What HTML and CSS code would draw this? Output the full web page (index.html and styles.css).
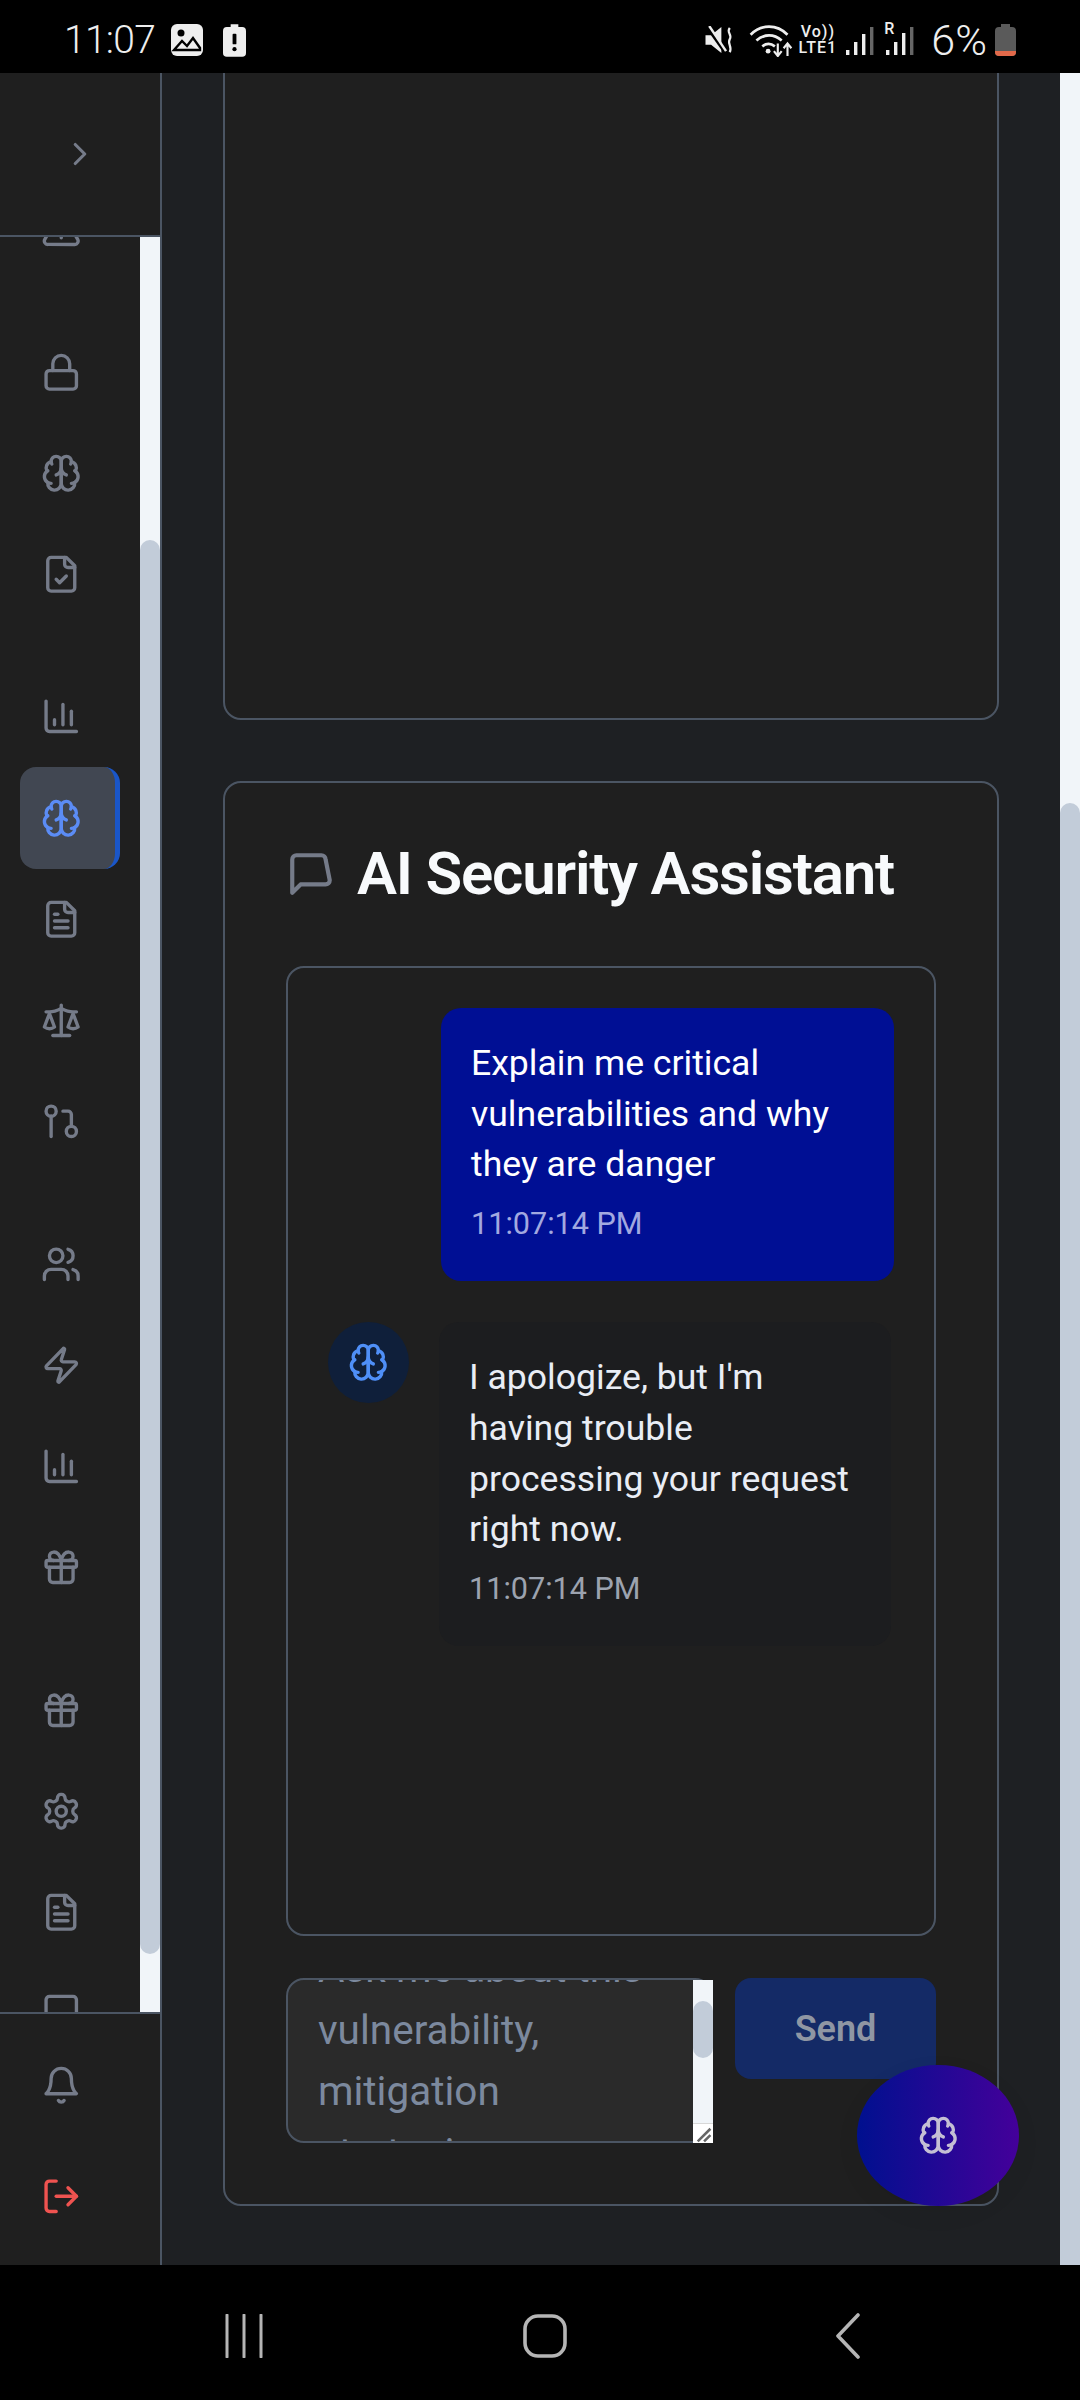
FILE: index.html
```html
<!DOCTYPE html>
<html lang="en">
<head>
  <meta charset="UTF-8">
  <meta name="viewport" content="width=device-width, initial-scale=1.0">
  <title>AI Security Assistant</title>
  <link rel="stylesheet" href="styles.css">
</head>
<body>
  <svg class="sprites" xmlns="http://www.w3.org/2000/svg">
    <symbol id="i-alert" viewBox="0 0 24 24"><path d="m21.73 18-8-14a2 2 0 0 0-3.48 0l-8 14A2 2 0 0 0 4 21h16a2 2 0 0 0 1.73-3"/><path d="M12 9v4"/><path d="M12 17h.01"/></symbol>
    <symbol id="i-lock" viewBox="0 0 24 24"><rect x="3" y="11" width="18" height="11" rx="2"/><path d="M7 11V7a5 5 0 0 1 10 0v4"/></symbol>
    <symbol id="i-brain" viewBox="0 0 24 24"><path d="M12 5a3 3 0 1 0-5.997.125 4 4 0 0 0-2.526 5.77 4 4 0 0 0 .556 6.588A4 4 0 1 0 12 18Z"/><path d="M12 5a3 3 0 1 1 5.997.125 4 4 0 0 1 2.526 5.77 4 4 0 0 1-.556 6.588A4 4 0 1 1 12 18Z"/><path d="M15 13a4.5 4.5 0 0 1-3-4 4.5 4.5 0 0 1-3 4"/><path d="M17.599 6.5a3 3 0 0 0 .399-1.375"/><path d="M6.003 5.125A3 3 0 0 0 6.401 6.5"/><path d="M3.477 10.896a4 4 0 0 1 .585-.396"/><path d="M19.938 10.5a4 4 0 0 1 .585.396"/><path d="M6 18a4 4 0 0 1-1.967-.516"/><path d="M19.967 17.484A4 4 0 0 1 18 18"/></symbol>
    <symbol id="i-file-check" viewBox="0 0 24 24"><path d="M15 2H6a2 2 0 0 0-2 2v16a2 2 0 0 0 2 2h12a2 2 0 0 0 2-2V7Z"/><path d="M14 2v4a2 2 0 0 0 2 2h4"/><path d="m9 15 2 2 4-4"/></symbol>
    <symbol id="i-chart" viewBox="0 0 24 24"><path d="M3 3v16a2 2 0 0 0 2 2h16"/><path d="M18 17V9"/><path d="M13 17V5"/><path d="M8 17v-3"/></symbol>
    <symbol id="i-file-text" viewBox="0 0 24 24"><path d="M15 2H6a2 2 0 0 0-2 2v16a2 2 0 0 0 2 2h12a2 2 0 0 0 2-2V7Z"/><path d="M14 2v4a2 2 0 0 0 2 2h4"/><path d="M10 9H8"/><path d="M16 13H8"/><path d="M16 17H8"/></symbol>
    <symbol id="i-scale" viewBox="0 0 24 24"><path d="m16 16 3-8 3 8c-.87.65-1.92 1-3 1s-2.13-.35-3-1Z"/><path d="m2 16 3-8 3 8c-.87.65-1.92 1-3 1s-2.13-.35-3-1Z"/><path d="M7 21h10"/><path d="M12 3v18"/><path d="M3 7h2c2 0 5-1 7-2 2 1 5 2 7 2h2"/></symbol>
    <symbol id="i-pull" viewBox="0 0 24 24"><circle cx="18" cy="18" r="3"/><circle cx="6" cy="6" r="3"/><path d="M13 6h3a2 2 0 0 1 2 2v7"/><path d="M6 9v12"/></symbol>
    <symbol id="i-users" viewBox="0 0 24 24"><path d="M16 21v-2a4 4 0 0 0-4-4H6a4 4 0 0 0-4 4v2"/><circle cx="9" cy="7" r="4"/><path d="M22 21v-2a4 4 0 0 0-3-3.87"/><path d="M16 3.13a4 4 0 0 1 0 7.75"/></symbol>
    <symbol id="i-zap" viewBox="0 0 24 24"><path d="M4 14a1 1 0 0 1-.78-1.63l9.9-10.2a.5.5 0 0 1 .86.46l-1.92 6.02A1 1 0 0 0 13 10h7a1 1 0 0 1 .78 1.63l-9.9 10.2a.5.5 0 0 1-.86-.46l1.92-6.02A1 1 0 0 0 11 14z"/></symbol>
    <symbol id="i-gift" viewBox="0 0 24 24"><rect x="3" y="8" width="18" height="4" rx="1"/><path d="M12 8v13"/><path d="M19 12v7a2 2 0 0 1-2 2H7a2 2 0 0 1-2-2v-7"/><path d="M7.5 8a2.5 2.5 0 0 1 0-5A4.8 8 0 0 1 12 8a4.8 8 0 0 1 4.5-5 2.5 2.5 0 0 1 0 5"/></symbol>
    <symbol id="i-settings" viewBox="0 0 24 24"><path d="M12.22 2h-.44a2 2 0 0 0-2 2v.18a2 2 0 0 1-1 1.73l-.43.25a2 2 0 0 1-2 0l-.15-.08a2 2 0 0 0-2.73.73l-.22.38a2 2 0 0 0 .73 2.73l.15.1a2 2 0 0 1 1 1.72v.51a2 2 0 0 1-1 1.74l-.15.09a2 2 0 0 0-.73 2.73l.22.38a2 2 0 0 0 2.73.73l.15-.08a2 2 0 0 1 2 0l.43.25a2 2 0 0 1 1 1.73V20a2 2 0 0 0 2 2h.44a2 2 0 0 0 2-2v-.18a2 2 0 0 1 1-1.73l.43-.25a2 2 0 0 1 2 0l.15.08a2 2 0 0 0 2.73-.73l.22-.39a2 2 0 0 0-.73-2.73l-.15-.08a2 2 0 0 1-1-1.74v-.5a2 2 0 0 1 1-1.74l.15-.09a2 2 0 0 0 .73-2.73l-.22-.38a2 2 0 0 0-2.73-.73l-.15.08a2 2 0 0 1-2 0l-.43-.25a2 2 0 0 1-1-1.73V4a2 2 0 0 0-2-2z"/><circle cx="12" cy="12" r="3"/></symbol>
    <symbol id="i-card" viewBox="0 0 24 24"><rect x="3" y="2" width="18" height="20" rx="2"/></symbol>
    <symbol id="i-bell" viewBox="0 0 24 24"><path d="M6 8a6 6 0 0 1 12 0c0 7 3 9 3 9H3s3-2 3-9"/><path d="M10.3 21a1.94 1.94 0 0 0 3.4 0"/></symbol>
    <symbol id="i-logout" viewBox="0 0 24 24"><path d="M9 21H5a2 2 0 0 1-2-2V5a2 2 0 0 1 2-2h4"/><path d="m16 17 5-5-5-5"/><path d="M21 12H9"/></symbol>
    <symbol id="i-message" viewBox="0 0 24 24"><path d="M21 15a2 2 0 0 1-2 2H7l-4 4V5a2 2 0 0 1 2-2h12a2 2 0 0 1 2 2z"/></symbol>
    <symbol id="i-chevron" viewBox="0 0 24 24"><path d="m9 18 6-6-6-6"/></symbol>
  </svg>

  <header class="status-bar">
    <div class="status-left">
      <span class="clock">11:07</span>
      <svg class="status-photo" viewBox="0 0 32 32"><rect width="32" height="32" rx="6" fill="#eee"/><circle cx="10" cy="9" r="3.5" fill="#000"/><path d="M3 26l8-9 5 5 6-8 7 10v2H3z" fill="none" stroke="#000" stroke-width="2.4"/></svg>
      <svg class="status-batt-alert" viewBox="0 0 24 34"><path d="M8 0h8v3h4a4 4 0 0 1 4 4v23a4 4 0 0 1-4 4H4a4 4 0 0 1-4-4V7a4 4 0 0 1 4-4h4z" fill="#eee"/><rect x="10" y="10" width="4" height="11" rx="1" fill="#000"/><circle cx="12" cy="26" r="2.2" fill="#000"/></svg>
    </div>
    <div class="status-right">
      <svg class="status-mute" viewBox="0 0 30 30"><path d="M0 10h6l11-9v28L6 20H0z" fill="#eee"/><path d="M1 0l19 27" stroke="#000" stroke-width="3.4"/><path d="M4 0l18 27" stroke="#eee" stroke-width="2.6"/><path d="M26 2c-4 5 3 7 0 12s3 8 0 14" fill="none" stroke="#eee" stroke-width="2.4"/></svg>
      <svg class="status-wifi" viewBox="0 0 44 34"><g fill="none" stroke="#eee" stroke-width="2.8"><path d="M1 11c11-11 27-11 38 0"/><path d="M7 17c8-7 18-7 26 0"/><path d="M13 23c4-3 9-3 13 0"/></g><circle cx="19" cy="28" r="2.5" fill="#eee"/><path d="M29 20v12m-4-4l4 5 4-5M39 33V20m-4 5l4-5 4 5" fill="none" stroke="#eee" stroke-width="2.2"/></svg>
      <div class="status-volte"><span>Vo))</span><span>LTE1</span></div>
      <svg class="status-signal" viewBox="0 0 28 28"><rect x="0" y="23" width="3.4" height="5" fill="#eee"/><rect x="8" y="15" width="3.4" height="13" fill="#eee"/><rect x="16" y="7" width="3.4" height="21" fill="#eee"/><rect x="24" y="0" width="3.4" height="28" fill="#666"/></svg>
      <div class="status-roam">
        <span>R</span>
        <svg viewBox="0 0 28 28"><rect x="0" y="23" width="3.4" height="5" fill="#eee"/><rect x="8" y="15" width="3.4" height="13" fill="#eee"/><rect x="16" y="6" width="3.4" height="22" fill="#eee"/><rect x="24" y="0" width="3.4" height="28" fill="#666"/></svg>
      </div>
      <span class="battery-pct">6%</span>
      <svg class="status-battery" viewBox="0 0 21 32"><path d="M6 0h9v3h2a4 4 0 0 1 4 4v21a4 4 0 0 1-4 4H4a4 4 0 0 1-4-4V7a4 4 0 0 1 4-4h2z" fill="#5a5a5a"/><path d="M0 27h21v1a4 4 0 0 1-4 4H4a4 4 0 0 1-4-4z" fill="#e2694a"/></svg>
    </div>
  </header>

  <div class="app">
    <aside class="sidebar">
      <div class="sidebar-top">
        <svg class="icon chevron"><use href="#i-chevron"/></svg>
      </div>
      <div class="sidebar-scroll">
        <nav class="sidebar-nav">
          <div class="nav-group">
            <a class="nav-item"><svg class="icon"><use href="#i-alert"/></svg></a>
          </div>
          <div class="nav-group">
            <a class="nav-item"><svg class="icon"><use href="#i-lock"/></svg></a>
            <a class="nav-item"><svg class="icon"><use href="#i-brain"/></svg></a>
            <a class="nav-item"><svg class="icon"><use href="#i-file-check"/></svg></a>
          </div>
          <div class="nav-group">
            <a class="nav-item"><svg class="icon"><use href="#i-chart"/></svg></a>
            <a class="nav-item active"><svg class="icon"><use href="#i-brain"/></svg></a>
            <a class="nav-item"><svg class="icon"><use href="#i-file-text"/></svg></a>
            <a class="nav-item"><svg class="icon"><use href="#i-scale"/></svg></a>
            <a class="nav-item"><svg class="icon"><use href="#i-pull"/></svg></a>
          </div>
          <div class="nav-group">
            <a class="nav-item"><svg class="icon"><use href="#i-users"/></svg></a>
            <a class="nav-item"><svg class="icon"><use href="#i-zap"/></svg></a>
            <a class="nav-item"><svg class="icon"><use href="#i-chart"/></svg></a>
            <a class="nav-item"><svg class="icon"><use href="#i-gift"/></svg></a>
          </div>
          <div class="nav-group">
            <a class="nav-item"><svg class="icon"><use href="#i-gift"/></svg></a>
            <a class="nav-item"><svg class="icon"><use href="#i-settings"/></svg></a>
            <a class="nav-item"><svg class="icon"><use href="#i-file-text"/></svg></a>
            <a class="nav-item"><svg class="icon"><use href="#i-card"/></svg></a>
          </div>
        </nav>
        <div class="sidebar-track"><div class="sidebar-thumb"></div></div>
      </div>
      <div class="sidebar-bottom">
        <a class="nav-item"><svg class="icon"><use href="#i-bell"/></svg></a>
        <a class="nav-item logout"><svg class="icon"><use href="#i-logout"/></svg></a>
      </div>
    </aside>

    <main class="main">
      <div class="content">
        <section class="card card-empty"></section>
        <section class="card card-chat">
          <h2 class="card-title">
            <svg class="icon title-icon"><use href="#i-message"/></svg>
            AI Security Assistant
          </h2>
          <div class="chat-log">
            <div class="msg msg-user">
              <div class="bubble bubble-user">
                <p>Explain me critical vulnerabilities and why they are danger</p>
                <time>11:07:14 PM</time>
              </div>
            </div>
            <div class="msg msg-ai">
              <div class="avatar"><svg class="icon"><use href="#i-brain"/></svg></div>
              <div class="bubble bubble-ai">
                <p>I apologize, but I'm having trouble processing your request right now.</p>
                <time>11:07:14 PM</time>
              </div>
            </div>
          </div>
          <div class="chat-form">
            <div class="fake-input">
              <div class="fake-clip">
                <div class="fake-text">
                  <span>Ask me about this</span>
                  <span>vulnerability,</span>
                  <span>mitigation</span>
                  <span>strategies</span>
                </div>
              </div>
              <div class="input-bar">
                <div class="input-track"><div class="input-thumb"></div></div>
                <div class="input-resize"><svg viewBox="0 0 12 12"><path d="M11 3L3 11M11 7l-4 4" stroke="#666" stroke-width="1.6"/></svg></div>
              </div>
            </div>
            <button class="send-btn" type="button">Send</button>
          </div>
        </section>
      </div>
      <div class="page-track"><div class="page-thumb"></div></div>
    </main>
  </div>

  <button class="fab" type="button"><svg class="icon"><use href="#i-brain"/></svg></button>

  <footer class="nav-bar">
    <svg class="nav-recents" viewBox="0 0 40 44"><path d="M3 1v42M20 1v42M37 1v42" stroke="#b5b5b5" stroke-width="3" stroke-linecap="round"/></svg>
    <svg class="nav-home" viewBox="0 0 44 44"><rect x="2" y="2" width="40" height="40" rx="13" fill="none" stroke="#b5b5b5" stroke-width="3.6"/></svg>
    <svg class="nav-back" viewBox="0 0 26 46"><path d="M23 2L3 23l20 21" fill="none" stroke="#b5b5b5" stroke-width="3.6" stroke-linecap="round" stroke-linejoin="round"/></svg>
  </footer>
</body>
</html>
```

FILE: styles.css
```css
* {
  box-sizing: border-box;
}
html, body {
  margin: 0;
  width: 1080px;
  height: 2400px;
  overflow: hidden;
}
body {
  display: flex;
  flex-direction: column;
  position: relative;
  background: #000;
  font-family: Roboto, "Noto Sans", sans-serif;
  color: #fff;
}
p {
  margin: 0;
}
.sprites {
  display: none;
}
.icon {
  width: 40.5px;
  height: 40.5px;
  flex: none;
  fill: none;
  stroke: #757b89;
  stroke-width: 2;
  stroke-linecap: round;
  stroke-linejoin: round;
}

/* status bar */
.status-bar {
  height: 73px;
  flex: none;
  display: flex;
  justify-content: space-between;
  align-items: center;
  padding: 7px 64px 0 64px;
  color: #eee;
}
.status-left, .status-right {
  display: flex;
  align-items: center;
}
.clock {
  font-size: 39px;
  font-weight: 300;
  letter-spacing: -0.7px;
  margin-right: 16px;
}
.status-photo {
  width: 32px;
  height: 32px;
  margin-right: 20px;
}
.status-batt-alert {
  width: 23px;
  height: 33px;
}
.status-mute {
  width: 29px;
  height: 28px;
  margin-right: 15px;
}
.status-wifi {
  width: 44px;
  height: 33px;
  margin-right: 5px;
}
.status-volte {
  display: flex;
  flex-direction: column;
  align-items: center;
  width: 39px;
  font-size: 16px;
  font-weight: 500;
  line-height: 16px;
  letter-spacing: 1px;
  white-space: nowrap;
  margin-right: 9px;
}
.status-signal {
  width: 28px;
  height: 28px;
  margin-right: 10px;
  margin-top: 2px;
}
.status-roam {
  position: relative;
  width: 30px;
  height: 30px;
  margin-right: 17px;
}
.status-roam span {
  position: absolute;
  left: 0;
  top: -4px;
  font-size: 16px;
  line-height: 16px;
  font-weight: 500;
}
.status-roam svg {
  position: absolute;
  left: 2px;
  bottom: 0;
  width: 28px;
  height: 28px;
}
.battery-pct {
  font-size: 43px;
  font-weight: 300;
  margin-right: 8px;
}
.status-battery {
  width: 21px;
  height: 32px;
}

/* app shell */
.app {
  height: 2192px;
  flex: none;
  display: flex;
  overflow: hidden;
}

/* sidebar */
.sidebar {
  width: 162px;
  flex: none;
  display: flex;
  flex-direction: column;
  background: #1f1f1f;
  border-right: 2px solid #4b5563;
}
.sidebar-top {
  height: 164px;
  flex: none;
  display: flex;
  align-items: center;
  justify-content: center;
  border-bottom: 2px solid #4b5563;
}
.chevron {
  width: 38px;
  height: 38px;
}
.sidebar-scroll {
  height: 1775px;
  flex: none;
  display: flex;
  overflow: hidden;
}
.sidebar-nav {
  width: 140px;
  flex: none;
  display: flex;
  flex-direction: column;
  gap: 41px;
  margin-top: -58px;
  padding-left: 20px;
  padding-right: 20px;
}
.nav-group {
  display: flex;
  flex-direction: column;
}
.nav-item {
  height: 101.25px;
  flex: none;
  display: flex;
  align-items: center;
  padding-left: 21px;
}
.nav-item.active {
  width: 100px;
  background: #414752;
  border-radius: 16px;
  border-right: 5px solid #1a56c8;
}
.nav-item.active .icon {
  stroke: #5b8cf5;
}
.sidebar-track {
  width: 20px;
  flex: none;
  background: #f1f5f9;
  padding-top: 303px;
}
.sidebar-thumb {
  height: 1414px;
  background: #c2ccd9;
  border-radius: 10px;
}
.sidebar-bottom {
  flex: 1;
  display: flex;
  flex-direction: column;
  border-top: 2px solid #4b5563;
  padding: 16px 0 0 20px;
}
.sidebar-bottom .nav-item {
  height: 111px;
}
.logout .icon {
  stroke: #ef5350;
}

/* main column */
.main {
  flex: 1;
  display: flex;
  min-width: 0;
  background: #1e2023;
}
.content {
  width: 898px;
  flex: none;
  padding: 0 61px;
  display: flex;
  flex-direction: column;
  gap: 61px;
}
.card {
  flex: none;
  background: #1f1f1f;
  border: 2px solid #4b5563;
  border-radius: 18px;
}
.card-empty {
  height: 687px;
  margin-top: -40px;
}
.card-chat {
  height: 1425px;
  padding: 50px 61px 0;
}
.card-title {
  margin: 0 0 52px;
  display: flex;
  align-items: center;
  gap: 21px;
  height: 81px;
  font-size: 60px;
  font-weight: 600;
  letter-spacing: -1.2px;
  color: #f8fafc;
}
.title-icon {
  width: 50px;
  height: 50px;
}
.chat-log {
  height: 970px;
  border: 2px solid #4b5563;
  border-radius: 18px;
  padding: 40px 40px 0;
  display: flex;
  flex-direction: column;
  gap: 41px;
}
.msg {
  display: flex;
}
.msg-user {
  justify-content: flex-end;
}
.bubble {
  width: 452px;
  border-radius: 20px;
  padding: 30px 30px 35px;
  font-size: 35.6px;
  line-height: 50.7px;
}
.bubble time {
  display: block;
  margin-top: 12px;
  font-size: 30.6px;
  line-height: 44px;
}
.bubble-user {
  width: 453px;
  background: #000f94;
}
.bubble-user time {
  color: #a2a9e0;
}
.bubble-ai {
  background: #1c1d1f;
  color: #e9edf5;
  margin-right: 3px;
}
.bubble-ai time {
  color: #9ca3af;
}
.msg-ai {
  justify-content: flex-end;
  position: relative;
}
.avatar {
  position: absolute;
  left: 0;
  top: 0;
  width: 81px;
  height: 81px;
  border-radius: 50%;
  background: #0f1f3a;
  display: flex;
  align-items: center;
  justify-content: center;
}
.avatar .icon {
  stroke: #4f8ff7;
}
.chat-form {
  display: flex;
  gap: 22px;
  margin-top: 42px;
  align-items: flex-start;
}
.fake-input {
  position: relative;
  width: 427px;
  height: 165px;
  flex: none;
  background: #2a2a2a;
  border: 2px solid #4b5563;
  border-radius: 18px;
  font-size: 40.5px;
  line-height: 61.5px;
  color: #7c899e;
}
.fake-clip {
  height: 100%;
  overflow: hidden;
  border-radius: 16px;
}
.fake-text {
  display: flex;
  flex-direction: column;
  padding-left: 30px;
  margin-top: -42px;
}
.input-bar {
  position: absolute;
  right: -2px;
  top: 0;
  bottom: -2px;
  width: 20px;
  display: flex;
  flex-direction: column;
  background: #f1f5f9;
}
.input-track {
  flex: 1;
  padding-top: 21px;
}
.input-thumb {
  height: 57px;
  border-radius: 10px;
  background: #c2ccd9;
}
.input-resize {
  height: 20px;
  flex: none;
  background: #fff;
  border-top: 1px solid #d8d8d8;
}
.input-resize svg {
  display: block;
  width: 19px;
  height: 19px;
}
.send-btn {
  width: 201px;
  height: 101px;
  flex: none;
  border: none;
  border-radius: 16px;
  background: #142a66;
  color: #8f96a3;
  font-family: inherit;
  font-size: 36px;
  font-weight: 600;
}

/* page scrollbar */
.page-track {
  width: 20px;
  flex: none;
  background: #f1f5f9;
  padding-top: 730px;
}
.page-thumb {
  height: 1500px;
  background: #c2ccd9;
  border-radius: 10px;
}

/* floating button */
.fab {
  position: absolute;
  left: 857px;
  top: 2065px;
  width: 162px;
  height: 141px;
  border: none;
  border-radius: 50%;
  background: linear-gradient(90deg, #00108f, #44009a);
  box-shadow: 0 8px 24px rgba(0, 0, 0, 0.06);
  display: flex;
  align-items: center;
  justify-content: center;
}
.fab .icon {
  stroke: #c4bfd4;
}

/* android nav bar */
.nav-bar {
  flex: 1;
  display: flex;
  align-items: center;
  padding-top: 7px;
}
.nav-recents {
  width: 40px;
  height: 44px;
  margin-left: 224px;
}
.nav-home {
  width: 44px;
  height: 44px;
  margin-left: 259px;
}
.nav-back {
  width: 26px;
  height: 46px;
  margin-left: 268px;
}
```
